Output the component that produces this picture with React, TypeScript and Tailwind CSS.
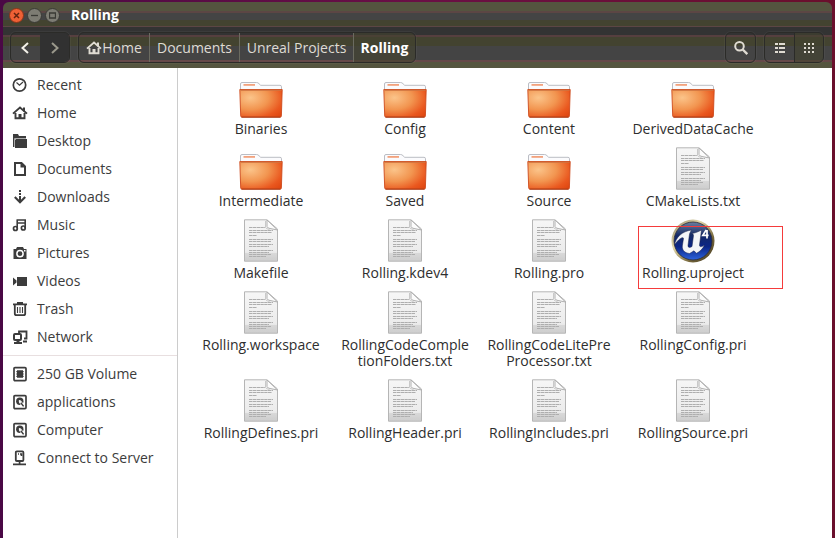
import type { ReactNode } from "react";

type IconName =
  | "recent" | "home" | "desktop" | "documents" | "downloads" | "music" | "pictures"
  | "videos" | "trash" | "network" | "volume" | "drive" | "server";

const glyphs: Record<IconName, ReactNode> = {
  recent: (
    <>
      <circle cx="7.5" cy="8" r="6.2" fill="none" stroke="currentColor" strokeWidth="1.7" />
      <path d="M4.5 5.5 7.5 8.2 11 5" fill="none" stroke="currentColor" strokeWidth="1.2" />
    </>
  ),
  home: (
    <>
      <path d="M1 8.6 8 2.6 15 8.6M3.5 8V13.2H12.5V8" fill="none" stroke="currentColor" strokeWidth="1.9" />
      <path d="M6.5 9h3v4.5h-3zM11 2.5h2v4h-2z" fill="currentColor" />
    </>
  ),
  desktop: (
    <>
      <path d="M1 1h5l1 2h7v2H4L3 6v8H1z" fill="currentColor" />
      <path d="M4 6h11v9H3V7z" fill="currentColor" />
      <path d="M2.5 14V5.5H14" fill="none" stroke="#aaa" strokeWidth="1" />
    </>
  ),
  documents: (
    <>
      <path d="M3 2h6.5L13 5.5V14H3z" fill="none" stroke="currentColor" strokeWidth="2" />
      <path d="M8.5 1.5v5H13z" fill="currentColor" />
    </>
  ),
  downloads: (
    <>
      <path d="M7 1h2v2H7zM7 4h2v2H7zM7 7h2v5H7z" fill="currentColor" />
      <path d="M2.8 8 8 13.2 13.2 8" fill="none" stroke="currentColor" strokeWidth="2.1" />
    </>
  ),
  music: (
    <>
      <path d="M5.2 11.5V3M13.2 11V2.5M4.5 3h9.4M5 6h8" fill="none" stroke="currentColor" strokeWidth="1.6" />
      <ellipse cx="3.4" cy="11.5" rx="1.9" ry="2" fill="none" stroke="currentColor" strokeWidth="1.7" />
      <ellipse cx="11.3" cy="11" rx="1.9" ry="2" fill="none" stroke="currentColor" strokeWidth="1.7" />
    </>
  ),
  pictures: (
    <>
      <path d="M1.5 4H4l1-2h6l1 2h2.5v10h-13z" fill="currentColor" />
      <circle cx="8" cy="8.7" r="3.1" fill="none" stroke="#fff" strokeWidth="1.5" />
      <path d="M12 5h1.5v1.5H12z" fill="#fff" />
    </>
  ),
  videos: <path d="M5 4h10v9H5zM1 4.5l3.5 3v2L1 12.5z" fill="currentColor" />,
  trash: (
    <>
      <path d="M1 3.3h14M5 1.8h6M2.8 4v8.5q0 1.7 1.7 1.7h7q1.7 0 1.7-1.7V4" fill="none" stroke="currentColor" strokeWidth="1.8" />
      <path d="M5.5 6v6M8 6v6M10.5 6v6" stroke="currentColor" strokeWidth="1.1" />
    </>
  ),
  network: (
    <>
      <path d="M7 4V2.5h7.5v7H12M11 12.5h4" fill="none" stroke="currentColor" strokeWidth="1.8" />
      <rect x="2" y="5" width="7" height="6" rx="1" fill="#fff" stroke="currentColor" strokeWidth="2" />
      <path d="M4.5 11.5h3V13H10v2H2v-2h2.5z" fill="currentColor" />
    </>
  ),
  volume: (
    <>
      <rect x="2" y="1.6" width="12" height="13" rx="1" fill="none" stroke="currentColor" strokeWidth="1.7" />
      <path d="M5 4.5h6v7H5z" fill="currentColor" />
      <path d="M4.2 5.7h7.6M4.2 8h7.6M4.2 10.3h7.6M6 4v8M8 4v8M10 4v8" stroke="currentColor" strokeWidth="1" />
    </>
  ),
  drive: (
    <>
      <rect x="2" y="1.6" width="12" height="13" rx="1" fill="none" stroke="currentColor" strokeWidth="1.7" />
      <circle cx="7.8" cy="7.2" r="3.7" fill="currentColor" />
      <path d="M8 7.5 11.5 12.5" stroke="#fff" strokeWidth="2.8" />
      <path d="m8.8 8.8 2.8 3.6" stroke="currentColor" strokeWidth="1.5" />
      <circle cx="7.8" cy="7.1" r="1.1" fill="#fff" />
    </>
  ),
  server: (
    <>
      <rect x="3.8" y="1.4" width="7.6" height="9.6" rx="1" fill="none" stroke="currentColor" strokeWidth="1.8" />
      <path d="M6 4h1M8 4h1.5v2M7.6 11v3M1 14.3h13" fill="none" stroke="currentColor" strokeWidth="1.7" />
    </>
  ),
};

function Glyph({ name }: { name: IconName }) {
  return (
    <svg viewBox="0 0 16 16" className="size-4 shrink-0" aria-hidden="true">
      {glyphs[name]}
    </svg>
  );
}

const places: { label: string; icon: IconName }[] = [
  { label: "Recent", icon: "recent" },
  { label: "Home", icon: "home" },
  { label: "Desktop", icon: "desktop" },
  { label: "Documents", icon: "documents" },
  { label: "Downloads", icon: "downloads" },
  { label: "Music", icon: "music" },
  { label: "Pictures", icon: "pictures" },
  { label: "Videos", icon: "videos" },
  { label: "Trash", icon: "trash" },
  { label: "Network", icon: "network" },
];

const devices: { label: string; icon: IconName }[] = [
  { label: "250 GB Volume", icon: "volume" },
  { label: "applications", icon: "drive" },
  { label: "Computer", icon: "drive" },
  { label: "Connect to Server", icon: "server" },
];

type Entry = { kind: "folder" | "text" | "unreal"; name: ReactNode; id: string };

const entries: Entry[] = [
  { kind: "folder", id: "binaries", name: "Binaries" },
  { kind: "folder", id: "config", name: "Config" },
  { kind: "folder", id: "content", name: "Content" },
  { kind: "folder", id: "ddc", name: "DerivedDataCache" },
  { kind: "folder", id: "intermediate", name: "Intermediate" },
  { kind: "folder", id: "saved", name: "Saved" },
  { kind: "folder", id: "source", name: "Source" },
  { kind: "text", id: "cmake", name: "CMakeLists.txt" },
  { kind: "text", id: "makefile", name: "Makefile" },
  { kind: "text", id: "kdev", name: "Rolling.kdev4" },
  { kind: "text", id: "pro", name: "Rolling.pro" },
  { kind: "unreal", id: "uproject", name: "Rolling.uproject" },
  { kind: "text", id: "workspace", name: "Rolling.workspace" },
  { kind: "text", id: "completion", name: <>RollingCodeComple<wbr />tionFolders.txt</> },
  { kind: "text", id: "preprocessor", name: <>RollingCodeLitePre<wbr />Processor.txt</> },
  { kind: "text", id: "configpri", name: "RollingConfig.pri" },
  { kind: "text", id: "defines", name: "RollingDefines.pri" },
  { kind: "text", id: "header", name: "RollingHeader.pri" },
  { kind: "text", id: "includes", name: "RollingIncludes.pri" },
  { kind: "text", id: "sourcepri", name: "RollingSource.pri" },
];

function SharedGradients() {
  return (
    <svg className="absolute size-0" aria-hidden="true">
      <defs>
        <radialGradient id="folderFill" cx="0.25" cy="0.3" r="0.95">
          <stop offset="0" stopColor="#fbc48a" />
          <stop offset="0.45" stopColor="#f29550" />
          <stop offset="0.8" stopColor="#ea581f" />
          <stop offset="1" stopColor="#e04812" />
        </radialGradient>
        <linearGradient id="paperFill" x1="0" y1="0" x2="0" y2="1">
          <stop offset="0" stopColor="#f6f6f6" />
          <stop offset="0.75" stopColor="#ececec" />
          <stop offset="1" stopColor="#d6d6d6" />
        </linearGradient>
        <linearGradient id="orbFill" x1="0" y1="0" x2="0" y2="1">
          <stop offset="0" stopColor="#6d80a0" />
          <stop offset="0.35" stopColor="#152a66" />
          <stop offset="0.65" stopColor="#0b2587" />
          <stop offset="1" stopColor="#2d63dc" />
        </linearGradient>
        <linearGradient id="orbRim" x1="0" y1="0" x2="1" y2="1">
          <stop offset="0" stopColor="#8d8465" />
          <stop offset="0.35" stopColor="#e3d8ab" />
          <stop offset="0.7" stopColor="#75663a" />
          <stop offset="1" stopColor="#3e3520" />
        </linearGradient>
      </defs>
    </svg>
  );
}

function FolderIcon() {
  return (
    <svg viewBox="0 0 44 44" className="size-11" aria-hidden="true">
      <path d="M1.5 15V9q0-1.5 1.5-1.5h14.5q1.5 0 2.5 1.2l1.7 1.6H41q1.5 0 1.5 1.5V16z" fill="#fbfbfd" stroke="#bbbdc4" />
      <path d="M4.5 9.9h11.5" stroke="#f3a27c" strokeWidth="1.8" />
      <path d="M.8 14.5h42.4l-.8 26.4q0 1.1-1.1 1.1H2.8q-1.1 0-1.1-1.1z" fill="url(#folderFill)" stroke="#cd4a1c" strokeWidth=".9" />
      <path d="M1.5 15.3h41" stroke="#cf7340" strokeWidth="1" />
      <path d="M2.5 42.2h39" stroke="#a83a16" strokeWidth="1" />
    </svg>
  );
}

const paperLines: [number, number][] = [
  [8.5, 16], [11.5, 24], [13.5, 23], [16.5, 8],
  [20.5, 24], [22.5, 22], [25.5, 24], [27.5, 20],
  [31.5, 24], [33.5, 20], [35.5, 22], [37.5, 17],
];

function TextFileIcon() {
  return (
    <svg viewBox="0 0 44 44" className="size-11" aria-hidden="true">
      <path d="M5.5 .8H28L38.5 10v32.2h-33z" fill="url(#paperFill)" stroke="#b5b5b5" />
      <path d="M6 34h32v7.8H6z" fill="#bdbdbd" opacity=".35" />
      {paperLines.map(([y, width]) => (
        <path key={y} d={`M10 ${y}h${width}`} stroke="#aeaeae" strokeWidth="1" strokeDasharray="3.4 .4" />
      ))}
      <path d="M28 1v6.5q1 2 3 2L38.5 11z" fill="#fcfcfc" stroke="#b0b0b0" />
      <path d="M26.5 2v6.5q1 1.5 4 2" fill="none" stroke="#c9c9c9" />
    </svg>
  );
}

function UnrealIcon() {
  return (
    <svg viewBox="0 0 44 44" className="size-11" aria-hidden="true">
      <circle cx="22" cy="22" r="21.5" fill="url(#orbRim)" />
      <circle cx="22" cy="22" r="19" fill="url(#orbFill)" stroke="#2b2a33" strokeWidth=".8" />
      <path
        d="M3.5 26C5 18 11 12.5 20.5 11c-1.2 2-2 3.6-2.2 5.5L17 26.5c-.2 2.2 1.8 2.4 4 1l1.5-11c0-1.100-.7-1.800-1.800-1.900C24 14 27 13 30.500 11l-2 15c0 2 1.500 2.400 5 .3-2 3.700-4.500 6.200-8 8L23 31.800l-4.400 2.700c-4.600-.5-7.600-3-7.300-7.500l1.200-7.500c0-2-4.500-.5-9 6.500z"
        fill="#f4f5f8"
        stroke="#17204a"
        strokeWidth=".5"
      />
      <path d="M35.2 11 31.8 16.4H37.600M36 11V19.600" fill="none" stroke="#fff" strokeWidth="1.7" />
    </svg>
  );
}

const entryIcons = { folder: FolderIcon, text: TextFileIcon, unreal: UnrealIcon };

function FileItem({ entry }: { entry: Entry }) {
  const Icon = entryIcons[entry.kind];
  return (
    <li className="relative flex justify-center">
      <button type="button" className="flex w-full flex-col items-center gap-0.5 self-start">
        <Icon />
        <span className="leading-4">{entry.name}</span>
      </button>
      {entry.kind === "unreal" && (
        <span className="pointer-events-none absolute left-[17px] top-[7px] h-[63px] w-[145px] border border-[#f53b3b]" />
      )}
    </li>
  );
}

function PlaceList({ items }: { items: { label: string; icon: IconName }[] }) {
  return (
    <ul>
      {items.map((item) => (
        <li key={item.label}>
          <a href="#" className="flex h-7 items-center gap-[9px] pl-[9px]">
            <Glyph name={item.icon} />
            {item.label}
          </a>
        </li>
      ))}
    </ul>
  );
}

function WindowControls() {
  const base = "flex size-[15px] items-center justify-center rounded-full border";
  return (
    <div className="flex gap-[3px]">
      <button type="button" aria-label="Close" className={`${base} border-[#8a3419] bg-[#ee6035]`}>
        <svg viewBox="0 0 7 7" className="size-[7px]"><path d="m1 1 5 5M6 1 1 6" stroke="#62230f" strokeWidth="1.5" /></svg>
      </button>
      <button type="button" aria-label="Minimize" className={`${base} border-[#3a3a35] bg-[#7d7c73]`}>
        <svg viewBox="0 0 7 7" className="size-[7px]"><path d="M0 3.5h7" stroke="#3a3a35" strokeWidth="1.3" /></svg>
      </button>
      <button type="button" aria-label="Maximize" className={`${base} border-[#3a3a35] bg-[#7d7c73]`}>
        <svg viewBox="0 0 7 7" className="size-[7px]"><path d="M.5 1h6v5h-6z" fill="none" stroke="#3a3a35" strokeWidth="1.3" /></svg>
      </button>
    </div>
  );
}

function Toolbar() {
  const group = "flex h-[31px] overflow-hidden rounded-md border border-[#2b2b28] shadow-[0_0_0_1px_#ffffff0a]";
  const cell = "flex w-[29px] items-center justify-center";
  return (
    <div className="flex h-10 items-start justify-between pl-[7px] pr-2 pt-1">
      <div className="flex gap-2">
        <div className={group}>
          <button type="button" aria-label="Back" className={cell}>
            <svg viewBox="0 0 16 16" className="size-4"><path d="M10 3 4.500 8 10 13" fill="none" stroke="#f3f1e8" strokeWidth="2" /></svg>
          </button>
          <button type="button" aria-label="Forward" className={`${cell} bg-[#313131]`}>
            <svg viewBox="0 0 16 16" className="size-4"><path d="m5 3 5.5 5L5 13" fill="none" stroke="#9a988b" strokeWidth="2" /></svg>
          </button>
        </div>
        <nav aria-label="Path" className={group}>
          <button type="button" className="flex w-[70px] items-center justify-center">
            <Glyph name="home" />
            Home
          </button>
          <button type="button" className="w-[90px] border-l border-[#6b6b60]">Documents</button>
          <button type="button" className="w-[114px] border-l border-[#6b6b60]">Unreal Projects</button>
          <button type="button" aria-current="page" className="w-[62px] border-l border-[#6b6b60] bg-[#42422f]/60 font-bold text-white">
            Rolling
          </button>
        </nav>
      </div>
      <div className="flex gap-2">
        <div className={group}>
          <button type="button" aria-label="Search" className={cell}>
            <svg viewBox="0 0 16 16" className="size-4">
              <circle cx="6.5" cy="6.3" r="4.3" fill="none" stroke="currentColor" strokeWidth="2" />
              <path d="m9.7 9.5 4.6 4.6" stroke="currentColor" strokeWidth="2.4" />
            </svg>
          </button>
        </div>
        <div className={group}>
          <button type="button" aria-label="List view" className={cell}>
            <svg viewBox="0 0 12 12" className="size-3" fill="currentColor">
              <path d="M1 1h3v2H1zM5 1h6v2H5zM1 5h3v2H1zM5 5h6v2H5zM1 9h3v2H1zM5 9h6v2H5z" />
            </svg>
          </button>
          <button type="button" aria-label="Grid view" className={`${cell} border-l border-[#2b2b28] bg-[#42422f]/60`}>
            <svg viewBox="0 0 12 12" className="size-3" fill="currentColor">
              <path d="M1 1h2v2H1zM5 1h2v2H5zM9 1h2v2H9zM1 5h2v2H1zM5 5h2v2H5zM9 5h2v2H9zM1 9h2v2H1zM5 9h2v2H5zM9 9h2v2H9z" />
            </svg>
          </button>
        </div>
      </div>
    </div>
  );
}

export default function App() {
  return (
    <div className="flex min-h-screen flex-col bg-[linear-gradient(90deg,#4a0845,#6a0f45_50%,#6a0f2c)] px-[3px] pt-0.5 font-['Open_Sans','Noto_Sans',sans-serif] text-sm text-[#3c3c3c]">
      <SharedGradients />
      <header className="rounded-t-md bg-[linear-gradient(180deg,#54543f_0_9px,#5c4644_9px_11px,#444444_11px_18px,#434330_18px_24px,#5c4644_24px_25px,#333333_25px_33px,#563f3f_33px_35px,#434330_35px_44px,#444444_44px_58px,#654848_58px_60px,#55553f_60px_66px)] text-[#dfdbd2]">
        <div className="flex h-[26px] items-center gap-[11px] pl-[6px]">
          <WindowControls />
          <h1 className="font-bold text-white">Rolling</h1>
        </div>
        <Toolbar />
      </header>
      <div className="flex grow bg-white">
        <aside className="w-[175px] shrink-0 border-r border-[#cccccc] pt-[3px]">
          <PlaceList items={places} />
          <hr className="my-1 border-[#e8dfe0]" />
          <PlaceList items={devices} />
        </aside>
        <main className="grow pl-[11px] pt-[7px] text-[#2e2e2e]">
          <ul className="grid grid-cols-[repeat(auto-fill,144px)] gap-y-[10px]">
            {entries.map((entry) => (
              <FileItem key={entry.id} entry={entry} />
            ))}
          </ul>
        </main>
      </div>
    </div>
  );
}
